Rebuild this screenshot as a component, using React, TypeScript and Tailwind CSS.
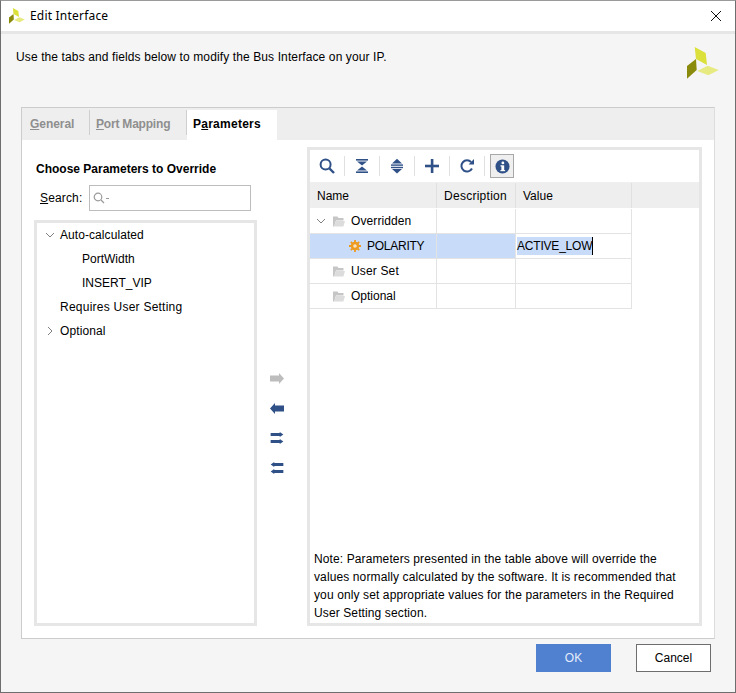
import React from "react";

function Logo({ className }: { className: string }) {
  return (
    <svg viewBox="0 0 32 32" className={className}>
      <polygon points="7.7,0 18.7,6 20,18 9,12" fill="#dbe03a" />
      <polygon points="10.3,24 20.7,18.7 31.7,23 21.3,28.3" fill="#e6ea80" />
      <polygon points="9,12 9.7,23 0,31.7 0,19" fill="#8a8b0c" />
    </svg>
  );
}

const blue = "#2f5188";

function ToolIcon({ name }: { name: string }) {
  if (name === "search")
    return (
      <svg viewBox="0 0 16 16" className="w-4 h-4" fill="none" stroke={blue}>
        <circle cx="6.6" cy="6.6" r="5" strokeWidth="2" />
        <path d="M10.5 10.5 L15 15" strokeWidth="2.4" />
      </svg>
    );
  if (name === "collapse")
    return (
      <svg viewBox="0 0 16 16" className="w-4 h-4" fill={blue}>
        <rect x="2" y="1" width="12" height="1.6" />
        <polygon points="3,3.6 13,3.6 8,7.6" />
        <polygon points="3,12.4 13,12.4 8,8.4" />
        <rect x="2" y="13.4" width="12" height="1.6" />
      </svg>
    );
  if (name === "expand")
    return (
      <svg viewBox="0 0 16 16" className="w-4 h-4" fill={blue}>
        <polygon points="3,5.4 13,5.4 8,0.8" />
        <rect x="2" y="6.4" width="12" height="1.4" />
        <rect x="2" y="8.8" width="12" height="1.4" />
        <polygon points="3,11 13,11 8,15.4" />
      </svg>
    );
  if (name === "plus")
    return (
      <svg viewBox="0 0 16 16" className="w-4 h-4" fill={blue}>
        <rect x="6.8" y="1" width="2.6" height="14" />
        <rect x="1" y="6.7" width="14" height="2.6" />
      </svg>
    );
  if (name === "refresh")
    return (
      <svg viewBox="0 0 16 16" className="w-4 h-4" fill="none">
        <path d="M13 10.5 A5.6 5.6 0 1 1 12.2 4.2" stroke={blue} strokeWidth="2" />
        <polygon points="9.6,6.4 15,6.4 15,1" fill={blue} />
      </svg>
    );
  return (
    <svg viewBox="0 0 16 16" className="w-[15px] h-[15px]">
      <circle cx="8" cy="8" r="7.5" fill={blue} />
      <rect x="6.8" y="6.8" width="3" height="6" fill="#fff" />
      <rect x="5.8" y="6.8" width="2" height="1.2" fill="#fff" />
      <rect x="5.8" y="11.8" width="5" height="1.2" fill="#fff" />
      <circle cx="8.4" cy="4.2" r="1.5" fill="#fff" />
    </svg>
  );
}

function Folder() {
  return (
    <svg viewBox="0 0 12 11" className="w-3 h-[11px] shrink-0">
      <path d="M0 10.5 V0.5 H4.5 L5.5 2 H10.5 V4.5 H3 L1.2 10.5 Z" fill="#c6c6c6" />
      <path d="M1.2 10.5 L3 5 H12 L10.4 10.5 Z" fill="#dcdcdc" />
    </svg>
  );
}

function Chevron({ open }: { open?: boolean }) {
  return (
    <svg viewBox="0 0 10 10" className="w-[10px] h-[10px] shrink-0" fill="none" stroke="#808080">
      <path d={open ? "M1 3 L5 7 L9 3" : "M3 1 L7 5 L3 9"} />
    </svg>
  );
}

function Gear() {
  return (
    <svg viewBox="0 0 12 12" className="w-3 h-3 shrink-0">
      <path d="M6 0 V12 M0 6 H12 M1.8 1.8 L10.2 10.2 M10.2 1.8 L1.8 10.2" stroke="#ee9a1d" strokeWidth="1.8" />
      <circle cx="6" cy="6" r="4.2" fill="#ee9a1d" />
      <circle cx="6" cy="6" r="1.8" fill="#f6e3c4" />
    </svg>
  );
}

function Arrow({ dir, color }: { dir: "right" | "left"; color: string }) {
  return (
    <svg viewBox="0 0 14 11" className="w-[14px] h-[11px]" fill={color}>
      {dir === "right" ? (
        <polygon points="0,2.5 9,2.5 9,0 14,5.5 9,11 9,8.5 0,8.5" />
      ) : (
        <polygon points="14,2.5 5,2.5 5,0 0,5.5 5,11 5,8.5 14,8.5" />
      )}
    </svg>
  );
}

function Arrow2({ dir }: { dir: "right" | "left" }) {
  const pts =
    dir === "right"
      ? "0,1 10,1 10,0 14,2.75 10,5.5 10,4.5 0,4.5"
      : "14,1 4,1 4,0 0,2.75 4,5.5 4,4.5 14,4.5";
  return (
    <div className="flex flex-col gap-[2px]">
      <svg viewBox="0 0 14 5.5" className="w-[14px] h-[5px]" fill={blue}><polygon points={pts} /></svg>
      <svg viewBox="0 0 14 5.5" className="w-[14px] h-[5px]" fill={blue}><polygon points={pts} /></svg>
    </div>
  );
}

function Sep() {
  return <div className="w-px h-5 bg-[#e0e0e0]" />;
}

function Row({ children, selected, value }: { children: React.ReactNode; selected?: boolean; value?: React.ReactNode }) {
  return (
    <div className="flex h-[25px] w-[322px] border-b border-[#e3e3e3]">
      <div className={`w-[127px] flex items-center border-r border-[#e3e3e3] ${selected ? "bg-[#c8dcfa]" : ""}`}>{children}</div>
      <div className={`w-[79px] border-r border-[#e3e3e3] ${selected ? "bg-[#c8dcfa]" : ""}`} />
      <div className="w-[116px] border-r border-[#e3e3e3] flex items-center">{value}</div>
    </div>
  );
}

export default function App() {
  return (
    <div className="w-[736px] h-[693px] flex flex-col bg-[#f5f5f5] border border-[#6e6e6e] border-t-[#9a9a9a] text-[12px] text-black font-['Liberation_Sans',Arial,sans-serif]">
      <div className="h-[30px] shrink-0 bg-white flex items-center pl-2 pr-[13px]">
        <Logo className="w-4 h-4 mr-[5px]" />
        <span className="flex-1 font-['Noto_Sans',sans-serif] tracking-[0.2px]">Edit Interface</span>
        <svg viewBox="0 0 12 12" className="w-3 h-3" fill="none" stroke="#111"><path d="M1 1 L11 11 M11 1 L1 11" /></svg>
      </div>
      <div className="h-[3px] shrink-0 bg-[#e6e6e6]" />
      <div className="h-[73px] shrink-0 flex pl-[15px] pr-[16px]">
        <div className="flex-1 pt-[15px] leading-[16px] tracking-[0.115px]">Use the tabs and fields below to modify the Bus Interface on your IP.</div>
        <Logo className="w-8 h-8 mt-[13px]" />
      </div>

      <div className="mx-[20px] w-[694px] h-[532px] shrink-0 flex flex-col bg-white border border-[#cccccc] border-r-[#dddddd]">
        <div className="h-[32px] shrink-0 bg-[#eeeeee] pt-[2px] flex font-bold">
          <div className="w-[67px] pl-[8px] pb-[2px] flex items-center text-[#8f8f8f]">
            <span className="tracking-[-0.05px]"><u>G</u>eneral</span>
          </div>
          <div className="w-px h-[25px] bg-[#cfcfcf]" />
          <div className="w-[96px] pl-[6px] pb-[2px] flex items-center text-[#8f8f8f]">
            <span className="tracking-[-0.2px]"><u>P</u>ort Mapping</span>
          </div>
          <div className="w-px h-[25px] bg-[#cfcfcf]" />
          <div className="w-[90px] pl-[6px] pb-[2px] flex items-center bg-white">
            <span className="tracking-[0.25px]">P<u>a</u>rameters</span>
          </div>
        </div>

        <div className="flex-1 flex px-[12px] pt-[7px] pb-[12px]">
          <div className="w-[223px] shrink-0 flex flex-col">
            <div className="font-bold pt-[14px] pl-[2px] leading-[16px] h-[38px]">Choose Parameters to Override</div>
            <div className="flex items-center h-[26px] pl-[6px]">
              <span className="w-[49px] tracking-[0.15px]"><u>S</u>earch:</span>
              <div className="w-[162px] h-[26px] bg-white border border-[#bdbdbd] flex items-center pl-[3px] gap-px">
                <svg viewBox="0 0 12 12" className="w-[12px] h-[12px]" fill="none" stroke="#9a9a9a" strokeWidth="1.2">
                  <circle cx="5" cy="5" r="3.8" />
                  <path d="M8 8 L11 11" />
                </svg>
                <span className="block w-[3px] h-px bg-[#9a9a9a] mt-[1px]" />
              </div>
            </div>
            <div className="mt-[9px] flex-1 bg-white border-[3px] border-[#e6e6e6]">
              <div className="h-[24px] flex items-center pl-[8px] gap-[5px] tracking-[0.07px]"><Chevron open />Auto-calculated</div>
              <div className="h-[24px] flex items-center pl-[45px]">PortWidth</div>
              <div className="h-[24px] flex items-center pl-[45px]">INSERT_VIP</div>
              <div className="h-[24px] flex items-center pl-[23px] tracking-[0.24px]">Requires User Setting</div>
              <div className="h-[24px] flex items-center pl-[8px] gap-[5px] tracking-[0.12px]"><Chevron />Optional</div>
            </div>
          </div>

          <div className="w-[50px] shrink-0 flex flex-col items-center pt-[216px] pr-[10px]">
            <div className="h-[30px] flex items-center"><Arrow dir="right" color="#bdbdbd" /></div>
            <div className="h-[30px] flex items-center"><Arrow dir="left" color={blue} /></div>
            <div className="h-[30px] flex items-center"><Arrow2 dir="right" /></div>
            <div className="h-[30px] flex items-center"><Arrow2 dir="left" /></div>
          </div>

          <div className="w-[395px] shrink-0 flex flex-col bg-white border-[3px] border-[#e6e6e6]">
            <div className="h-[33px] shrink-0 flex items-center pl-[9px] gap-[9px] border-b border-[#f0f0f0]">
              <ToolIcon name="search" />
              <Sep />
              <ToolIcon name="collapse" />
              <Sep />
              <ToolIcon name="expand" />
              <Sep />
              <ToolIcon name="plus" />
              <Sep />
              <ToolIcon name="refresh" />
              <Sep />
              <div className="w-[24px] h-[24px] -ml-[4px] bg-[#efefef] border border-[#a8a8a8] flex items-center justify-center"><ToolIcon name="info" /></div>
            </div>
            <div className="h-[25px] shrink-0 flex bg-[#eeeeee] mb-px">
              <div className="w-[127px] pl-[7px] pt-px flex items-center border-r border-[#e0e0e0]">Name</div>
              <div className="w-[79px] pl-[7px] pt-px flex items-center border-r border-[#e0e0e0] tracking-[0.27px]">Description</div>
              <div className="w-[116px] pl-[7px] pt-px flex items-center border-r border-[#e0e0e0]">Value</div>
            </div>
            <Row>
              <span className="ml-[6px] mr-[7px]"><Chevron open /></span>
              <Folder />
              <span className="ml-[6px] tracking-[0.1px]">Overridden</span>
            </Row>
            <Row selected value={
              <span className="ml-px bg-[#c8dcfa] leading-[18px] border-r border-black tracking-[-0.2px]">ACTIVE_LOW</span>
            }>
              <span className="ml-[39px]"><Gear /></span>
              <span className="ml-[6px] tracking-[-0.25px]">POLARITY</span>
            </Row>
            <Row>
              <span className="ml-[23px]"><Folder /></span>
              <span className="ml-[6px] tracking-[0.15px]">User Set</span>
            </Row>
            <Row>
              <span className="ml-[23px]"><Folder /></span>
              <span className="ml-[6px]">Optional</span>
            </Row>
            <div className="flex-1" />
            <div className="w-[372px] pl-[4px] pb-px leading-[18px] tracking-[0.115px]">
              Note: Parameters presented in the table above will override the values normally calculated by the software. It is recommended that you only set appropriate values for the parameters in the Required User Setting section.
            </div>
          </div>
        </div>
      </div>

      <div className="flex-1 flex justify-end items-start pt-[5px] pr-[24px] gap-[25px]">
        <button className="w-[75px] h-[28px] bg-[#5080d0] text-[#e4ecfa]">OK</button>
        <button className="w-[75px] h-[28px] bg-white border border-[#6e6e6e]">Cancel</button>
      </div>
    </div>
  );
}
